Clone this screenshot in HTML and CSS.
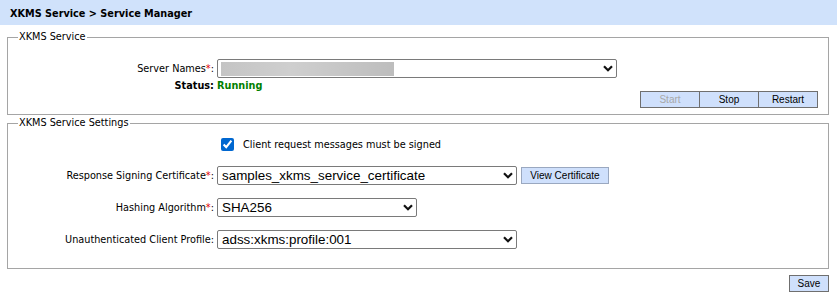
FILE: index.html
```html
<!DOCTYPE html>
<html>
<head>
<meta charset="utf-8">
<link rel="stylesheet" href="styles.css">
</head>
<body>
<div class="titlebar">XKMS Service &gt; Service Manager</div>
<div class="page">
  <fieldset class="box box-service">
    <legend>XKMS Service</legend>
    <div class="form-row row-server">
      <label class="lbl">Server Names<span class="req">*</span>:</label>
      <div class="select sel-server"><span class="blurred"></span><svg class="chev" width="10" height="7" viewBox="0 0 10 7"><path d="M1 1.2 L5 5.2 L9 1.2" fill="none" stroke="#111" stroke-width="2.2"/></svg></div>
    </div>
    <div class="form-row row-status">
      <label class="lbl">Status:</label>
      <span class="status">Running</span>
    </div>
    <div class="btn-group">
      <button class="btn btn-disabled">Start</button><button class="btn">Stop</button><button class="btn">Restart</button>
    </div>
  </fieldset>

  <fieldset class="box box-settings">
    <legend>XKMS Service Settings</legend>
    <div class="form-row row-check">
      <span class="lbl"></span>
      <label class="check"><input type="checkbox" checked> <span>Client request messages must be signed</span></label>
    </div>
    <div class="form-row row-field row-cert">
      <label class="lbl">Response Signing Certificate<span class="req">*</span>:</label>
      <div class="select sel-wide"><span class="val">samples_xkms_service_certificate</span><svg class="chev" width="10" height="7" viewBox="0 0 10 7"><path d="M1 1.2 L5 5.2 L9 1.2" fill="none" stroke="#111" stroke-width="2.2"/></svg></div>
      <button class="btn btn-view">View Certificate</button>
    </div>
    <div class="form-row row-field">
      <label class="lbl">Hashing Algorithm<span class="req">*</span>:</label>
      <div class="select sel-mid"><span class="val">SHA256</span><svg class="chev" width="10" height="7" viewBox="0 0 10 7"><path d="M1 1.2 L5 5.2 L9 1.2" fill="none" stroke="#111" stroke-width="2.2"/></svg></div>
    </div>
    <div class="form-row row-field">
      <label class="lbl">Unauthenticated Client Profile:</label>
      <div class="select sel-wide"><span class="val">adss:xkms:profile:001</span><svg class="chev" width="10" height="7" viewBox="0 0 10 7"><path d="M1 1.2 L5 5.2 L9 1.2" fill="none" stroke="#111" stroke-width="2.2"/></svg></div>
    </div>
  </fieldset>

  <div class="footer">
    <button class="btn btn-save">Save</button>
  </div>
</div>
</body>
</html>
```

FILE: styles.css
```css
html, body {
  margin: 0;
  padding: 0;
  background: #fff;
}
body {
  font-family: "DejaVu Sans Condensed", "DejaVu Sans", sans-serif;
  font-size: 10.8px;
  color: #000;
}
.titlebar {
  background: #d0e2fb;
  height: 25px;
  line-height: 27px;
  padding-left: 10px;
  font-weight: bold;
  font-size: 10.8px;
}
.page {
  padding: 0 8px 0 7px;
}
.box {
  margin: 0;
  padding: 0;
  border: 1px solid #a5a5a5;
  min-width: 0;
}
.box legend {
  padding: 0 1px;
  margin-left: 10px;
  font-size: 10.8px;
  line-height: 14px;
}
.box-service {
  margin-top: 5px;
  padding-bottom: 6px;
}
.box-settings {
  margin-top: 1px;
  padding-bottom: 19px;
}
.form-row {
  display: flex;
  align-items: center;
}
.lbl {
  width: 206px;
  text-align: right;
  margin-right: 3px;
  flex: none;
  white-space: nowrap;
}
.req {
  color: #e00000;
}
.row-server {
  margin-top: 15px;
}
.select {
  position: relative;
  box-sizing: border-box;
  height: 19px;
  border: 1px solid #7a7a7a;
  border-radius: 2px;
  background: #fff;
  font-family: "Liberation Sans", Arial, sans-serif;
  font-size: 13.4px;
  display: flex;
  align-items: center;
  padding-left: 4px;
}
.select .val {
  line-height: 17px;
}
.chev {
  position: absolute;
  right: 3px;
  top: 5px;
}
.sel-server {
  width: 400px;
}
.blurred {
  display: block;
  width: 173px;
  height: 14px;
  margin-left: -1px;
  background: linear-gradient(90deg, #c4c4c4, #cfcfcf 40%, #bdbdbd);
  filter: blur(0.6px);
}
.row-status {
  margin-top: 1px;
  height: 12px;
}
.row-status .lbl {
  font-weight: bold;
}
.status {
  color: #008000;
  font-weight: bold;
}
.btn-group {
  display: flex;
  justify-content: flex-end;
  margin-top: 0;
  margin-right: 10px;
}
.btn {
  box-sizing: border-box;
  height: 17px;
  width: 60px;
  margin: 0;
  padding: 0;
  background: #cfe0fc;
  border: 1px solid #6f6f6f;
  font-family: "Liberation Sans", Arial, sans-serif;
  font-size: 10px;
  color: #000;
}
.btn-group .btn + .btn {
  margin-left: -1px;
}
.btn-disabled {
  color: #a8a8a8;
}
.row-check {
  margin-top: 8px;
  height: 13px;
}
.check {
  display: flex;
  align-items: center;
}
.check input {
  margin: 0 9px 0 4px;
  width: 13px;
  height: 13px;
  accent-color: #0067d0;
}
.row-field {
  margin-top: 13px;
}
.row-cert {
  margin-top: 15px;
}
.sel-wide {
  width: 300px;
}
.sel-mid {
  width: 200px;
}
.btn-view {
  width: 88px;
  margin-left: 4px;
  border-color: #9aa8c0;
}
.footer {
  display: flex;
  justify-content: flex-end;
  margin-top: 6px;
  margin-right: 0;
}
.btn-save {
  width: 40px;
}
```
